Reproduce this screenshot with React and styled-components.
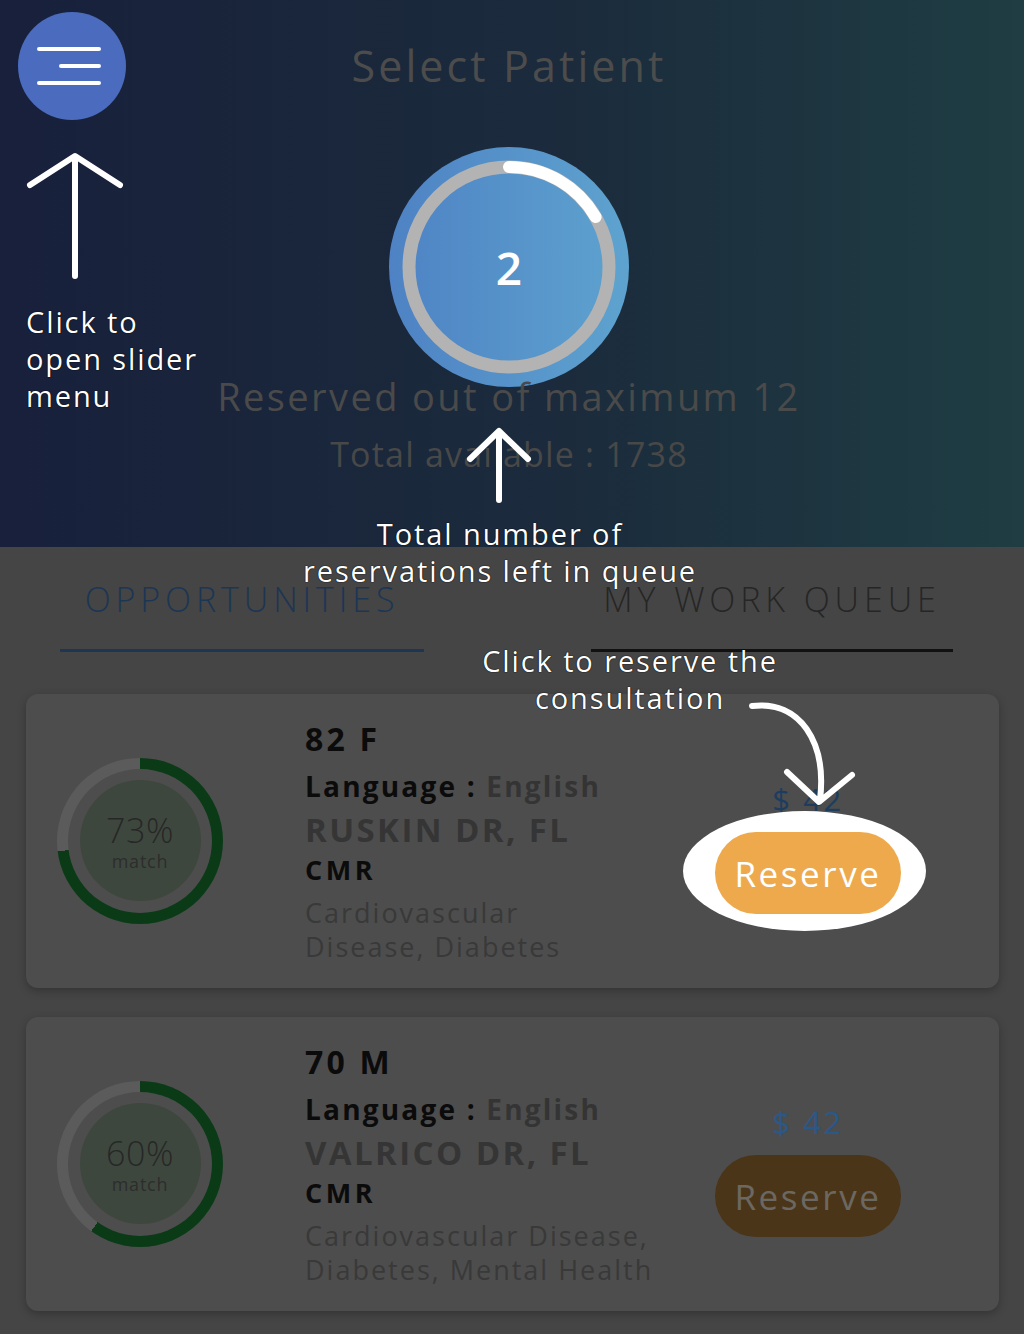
import React from "react";
import styled, { createGlobalStyle } from "styled-components";

const GlobalStyle = createGlobalStyle`
  * { box-sizing: border-box; }
  body {
    margin: 0;
    background: #454545;
    font-family: "Open Sans", "Liberation Sans", sans-serif;
  }
`;

const Page = styled.div`
  position: relative;
  width: 1024px;
  min-height: 1334px;
  overflow: hidden;
  background: #454545;
`;

const Header = styled.header`
  height: 547px;
  padding: 12px 24px 0 18px;
  display: flex;
  flex-direction: column;
  align-items: center;
  background: linear-gradient(90deg, #18203b 0%, #1b2b3c 55%, #1f3d43 100%);
`;

const TopRow = styled.div`
  width: 100%;
  display: grid;
  grid-template-columns: 108px 1fr 108px;
  align-items: center;
`;

const MenuButton = styled.button`
  width: 108px;
  height: 108px;
  border: 0;
  border-radius: 50%;
  background: #4a6bbe;
  display: flex;
  flex-direction: column;
  align-items: flex-end;
  justify-content: center;
  gap: 13px;
  padding: 0 25px 0 0;
`;

const MenuLine = styled.span`
  display: block;
  width: ${(p) => p.w}px;
  height: 4px;
  border-radius: 2px;
  background: #fff;
`;

const Title = styled.h1`
  margin: 0;
  text-align: center;
  font-size: 43px;
  line-height: 52px;
  font-weight: 400;
  letter-spacing: 3.1px;
  color: #4c4c4c;
`;

const Gauge = styled.div`
  margin-top: 27px;
  width: 240px;
  height: 240px;
  border-radius: 50%;
  background: linear-gradient(90deg, #4e82c4, #5ea3cf);
  display: grid;
  place-items: center;
  & > * {
    grid-area: 1 / 1;
  }
`;

const GaugeValue = styled.span`
  font-size: 46px;
  font-weight: 600;
  color: #fff;
  line-height: 1;
`;

const Reserved = styled.p`
  margin: -14px 0 0;
  font-size: 38px;
  line-height: 46px;
  letter-spacing: 2.4px;
  color: #4a4a4a;
`;

const Available = styled.p`
  margin: 12px 0 0;
  font-size: 34px;
  line-height: 46px;
  letter-spacing: 1.2px;
  color: #484848;
`;

const Body = styled.main`
  padding: 31px 25px 30px 26px;
`;

const Tabs = styled.nav`
  display: grid;
  grid-template-columns: 364px 362px;
  justify-content: space-between;
  padding: 0 46px 0 34px;
`;

const Tab = styled.div`
  text-align: center;
  font-size: 34px;
  line-height: 42px;
  font-weight: 300;
  letter-spacing: 4.9px;
  white-space: nowrap;
  padding-bottom: 29px;
  color: ${(p) => (p.active ? "#1c3654" : "#262626")};
  border-bottom: 3px solid ${(p) => (p.active ? "#1c3654" : "#111")};
`;

const CardList = styled.section`
  margin-top: 42px;
  display: flex;
  flex-direction: column;
  gap: 29px;
`;

const CardBox = styled.article`
  display: grid;
  grid-template-columns: 166px 1fr 186px;
  padding: 23px 98px 24px 31px;
  border-radius: 12px;
  background: #4d4d4d;
  box-shadow: 0 3px 8px rgba(0, 0, 0, 0.25);
`;

const Ring = styled.div`
  align-self: center;
  width: 166px;
  height: 166px;
  border-radius: 50%;
  background: conic-gradient(#0b3a17 0 ${(p) => p.pct}%, #5b5b5b ${(p) => p.pct}% 100%);
  display: grid;
  place-items: center;
`;

const RingGap = styled.div`
  width: 144px;
  height: 144px;
  border-radius: 50%;
  background: #4d4d4d;
  display: grid;
  place-items: center;
`;

const RingDisc = styled.div`
  width: 121px;
  height: 121px;
  border-radius: 50%;
  background: #3e473e;
  display: flex;
  flex-direction: column;
  align-items: center;
  justify-content: center;
  color: #272727;
`;

const Pct = styled.span`
  font-size: 34px;
  line-height: 40px;
  font-weight: 300;
  letter-spacing: 0.5px;
`;

const MatchLabel = styled.span`
  font-size: 18px;
  line-height: 22px;
  letter-spacing: 0.8px;
  color: #2d2d2d;
`;

const Info = styled.div`
  margin-left: 82px;
  display: flex;
  flex-direction: column;
`;

const Age = styled.div`
  font-size: 32px;
  line-height: 44px;
  font-weight: 700;
  letter-spacing: 3.2px;
  color: #0b0b0b;
`;

const Lang = styled.div`
  margin-top: 3px;
  font-size: 28px;
  line-height: 44px;
  font-weight: 700;
  letter-spacing: 2.2px;
  color: #0b0b0b;
  span {
    color: #343434;
  }
`;

const Location = styled.div`
  font-size: 33px;
  line-height: 44px;
  font-weight: 700;
  letter-spacing: 2.4px;
  color: #353535;
`;

const Study = styled.div`
  font-size: 27px;
  line-height: 36px;
  font-weight: 700;
  letter-spacing: 3.6px;
  color: #0b0b0b;
`;

const Conditions = styled.div`
  margin-top: 8px;
  font-size: 27px;
  line-height: 34px;
  font-weight: 400;
  letter-spacing: 2px;
  color: #393939;
`;

const Side = styled.div`
  padding-top: 63px;
  display: flex;
  flex-direction: column;
  align-items: center;
`;

const Price = styled.div`
  font-size: 31px;
  line-height: 38px;
  letter-spacing: 2.6px;
  color: ${(p) => (p.bright ? "#2a5888" : "#1e3d5e")};
`;

const Highlight = styled.div`
  position: relative;
  isolation: isolate;
  margin-top: 14px;
  &::before {
    content: "";
    display: ${(p) => (p.on ? "block" : "none")};
    position: absolute;
    z-index: -1;
    left: -32px;
    right: -25px;
    top: -21px;
    bottom: -17px;
    border-radius: 50%;
    background: #fff;
  }
`;

const ReserveButton = styled.button`
  width: 186px;
  height: 82px;
  border: 0;
  border-radius: 41px;
  font-family: inherit;
  font-size: 35px;
  letter-spacing: 2.6px;
  background: ${(p) => (p.on ? "#eda94c" : "#4b3519")};
  color: ${(p) => (p.on ? "#fff" : "#6b6862")};
`;

const Overlay = styled.svg`
  position: absolute;
  left: 0;
  top: 0;
  pointer-events: none;
`;

const Note = styled.p`
  position: absolute;
  margin: 0;
  font-size: 29px;
  line-height: 37px;
  font-weight: 500;
  letter-spacing: 1.9px;
  color: #fff;
  text-shadow: 0 0 1px #000, 0 0 1px #000;
  text-align: ${(p) => p.align || "left"};
  left: ${(p) => p.x}px;
  top: ${(p) => p.y}px;
  width: ${(p) => p.w}px;
`;

const patients = [
  {
    pct: 73,
    age: "82 F",
    location: "RUSKIN DR, FL",
    conditions: ["Cardiovascular", "Disease, Diabetes"],
    highlighted: true,
  },
  {
    pct: 60,
    age: "70 M",
    location: "VALRICO DR, FL",
    conditions: ["Cardiovascular Disease,", "Diabetes, Mental Health"],
    highlighted: false,
  },
];

const PatientCard = ({ pct, age, location, conditions, highlighted }) => (
  <CardBox>
    <Ring pct={pct}>
      <RingGap>
        <RingDisc>
          <Pct>{pct}%</Pct>
          <MatchLabel>match</MatchLabel>
        </RingDisc>
      </RingGap>
    </Ring>
    <Info>
      <Age>{age}</Age>
      <Lang>
        Language : <span>English</span>
      </Lang>
      <Location>{location}</Location>
      <Study>CMR</Study>
      <Conditions>
        {conditions.map((c) => (
          <div key={c}>{c}</div>
        ))}
      </Conditions>
    </Info>
    <Side>
      <Price bright={!highlighted}>$ 42</Price>
      <Highlight on={highlighted}>
        <ReserveButton on={highlighted}>Reserve</ReserveButton>
      </Highlight>
    </Side>
  </CardBox>
);

const App = () => {
  return (
    <Page>
      <GlobalStyle />
      <Header>
        <TopRow>
          <MenuButton aria-label="menu">
            <MenuLine w={64} />
            <MenuLine w={42} />
            <MenuLine w={64} />
          </MenuButton>
          <Title>Select Patient</Title>
          <span />
        </TopRow>
        <Gauge>
          <svg width="240" height="240" viewBox="0 0 240 240">
            <circle cx="120" cy="120" r="100" fill="none" stroke="#b3b3b3" strokeWidth="13" />
            <path
              d="M120 20 A100 100 0 0 1 206.6 70"
              fill="none"
              stroke="#fff"
              strokeWidth="12"
              strokeLinecap="round"
            />
          </svg>
          <GaugeValue>2</GaugeValue>
        </Gauge>
        <Reserved>Reserved out of maximum 12</Reserved>
        <Available>Total available : 1738</Available>
      </Header>

      <Body>
        <Tabs>
          <Tab active>OPPORTUNITIES</Tab>
          <Tab>MY WORK QUEUE</Tab>
        </Tabs>
        <CardList>
          {patients.map((p) => (
            <PatientCard key={p.age} {...p} />
          ))}
        </CardList>
      </Body>

      <Overlay width="1024" height="1334" viewBox="0 0 1024 1334">
        <g fill="none" stroke="#fff" strokeWidth="6" strokeLinecap="round" strokeLinejoin="round">
          <path d="M75 276 V157 M30 185 L75 156 L120 185" />
          <path d="M499 500 V432 M470 459 L499 431 L528 459" />
          <path d="M752 706 C800 700 827 742 820 800 M787 772 L819 802 L852 775" />
        </g>
      </Overlay>
      <Note x={26} y={303} w={220}>
        Click to
        <br />
        open slider
        <br />
        menu
      </Note>
      <Note x={230} y={515} w={540} align="center">
        Total number of
        <br />
        reservations left in queue
      </Note>
      <Note x={420} y={642} w={420} align="center">
        Click to reserve the
        <br />
        consultation
      </Note>
    </Page>
  );
};

export default App;
